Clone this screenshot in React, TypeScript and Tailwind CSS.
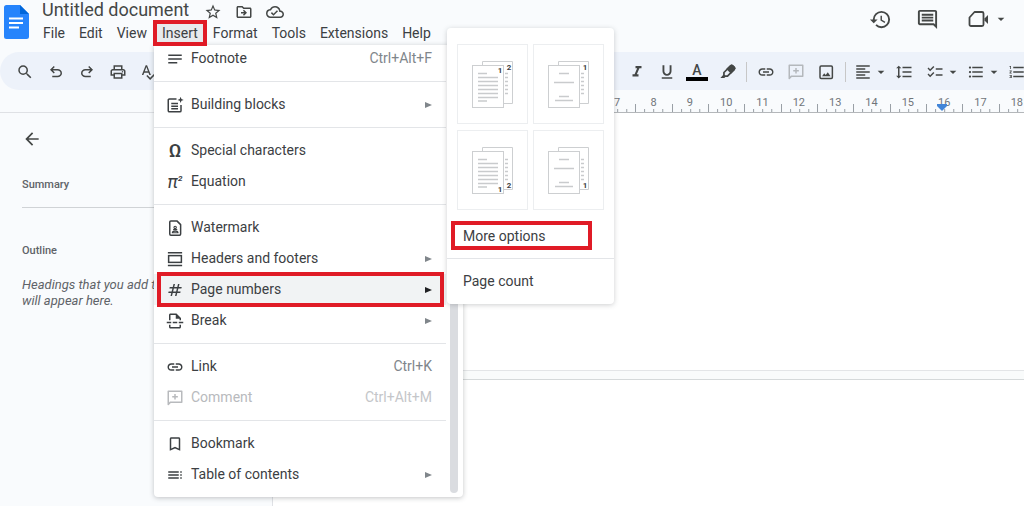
import type { ReactNode } from "react";
import {
  MdArrowBack,
  MdArrowDropDown,
  MdBookmarkBorder,
  MdChecklist,
  MdFormatAlignLeft,
  MdFormatItalic,
  MdFormatLineSpacing,
  MdFormatListBulleted,
  MdFormatListNumbered,
  MdFormatUnderlined,
  MdHistory,
  MdLink,
  MdNotes,
  MdNumbers,
  MdOutlineCloudDone,
  MdOutlineComment,
  MdOutlineDriveFileMove,
  MdOutlineInsertPageBreak,
  MdOutlinePrint,
  MdSearch,
  MdSpellcheck,
  MdStarBorder,
  MdToc,
} from "react-icons/md";

/* ---------- icons the package lacks ---------- */

function DocsLogo() {
  return (
    <svg viewBox="0 0 25 34" className="h-[34px] w-[25px] shrink-0" aria-hidden="true">
      <path d="M2.5 0H16l9 9v22.500a2.500 2.500 0 0 1-2.500 2.500h-20A2.500 2.500 0 0 1 0 31.500v-29A2.500 2.500 0 0 1 2.500 0z" fill="#2684fc" />
      <path d="M16 0l9 9h-9z" fill="#0066da" />
      <path d="M5 13.500h14M5 18h14M5 22.500h10" stroke="#fff" strokeWidth="1.900" />
    </svg>
  );
}

function UndoIcon({ flip = false }: { flip?: boolean }) {
  return (
    <svg viewBox="0 0 24 24" className={flip ? "size-[18px] -scale-x-100" : "size-[18px]"} fill="currentColor" aria-hidden="true">
      <path d="M7 19v-2h7.100q1.575 0 2.738-1T18 13.500 16.838 11 14.100 10H7.800l2.600 2.600L9 14 4 9l5-5 1.400 1.400L7.800 8h6.300q2.425 0 4.163 1.575T20 13.500t-1.737 3.925T14.100 19z" />
    </svg>
  );
}

function AddCommentIcon({ className = "size-[18px]" }: { className?: string }) {
  return (
    <svg viewBox="0 0 24 24" className={className} fill="none" stroke="currentColor" strokeWidth="2" aria-hidden="true">
      <path d="M3 20.500V3h18v14.500H6z" strokeLinejoin="round" />
      <path d="M12 6.500v7.500M8.300 10.200h7.500" />
    </svg>
  );
}

function HighlightIcon() {
  return (
    <svg viewBox="0 0 24 24" className="size-[19px]" fill="none" stroke="currentColor" strokeWidth="2.200" aria-hidden="true">
      <path d="M7.500 12L16 3.500a1.800 1.800 0 0 1 2.500 0l2 2a1.800 1.800 0 0 1 0 2.500L12 16.500H8.500L7.500 15.500z" strokeLinejoin="round" />
      <path d="M12 7.500L16 3.500a1.800 1.800 0 0 1 2.500 0l2 2a1.800 1.800 0 0 1 0 2.500l-4 4z" fill="currentColor" />
      <path d="M7 14.500L3 19h5l2-2z" fill="currentColor" stroke="none" />
    </svg>
  );
}

function ImageIcon() {
  return (
    <svg viewBox="0 0 24 24" className="size-[18px]" fill="none" stroke="currentColor" strokeWidth="2" aria-hidden="true">
      <rect x="4" y="4" width="16.500" height="16.500" rx="1.500" />
      <path d="M6.800 17.500l2.800-3.800 2 2.400 2.800-3.700 3.600 5.100z" fill="currentColor" stroke="none" />
    </svg>
  );
}

function CameraIcon() {
  return (
    <svg viewBox="0 0 24 24" className="size-6" fill="none" stroke="currentColor" strokeWidth="1.800" aria-hidden="true">
      <path d="M2.500 10.500l5-5.500H15a1.500 1.500 0 0 1 1.500 1.500v11a1.500 1.500 0 0 1-1.500 1.500H4a1.500 1.500 0 0 1-1.500-1.500z" strokeLinejoin="round" />
      <path d="M17.500 11.500l3.500-3.500v9l-3.500-3.500z" fill="currentColor" stroke="none" />
    </svg>
  );
}

function BlocksIcon() {
  return (
    <svg viewBox="0 0 24 24" className="size-[18px]" fill="none" stroke="currentColor" strokeWidth="2" aria-hidden="true">
      <path d="M14 4H4.500A1.500 1.500 0 0 0 3 5.500v14A1.500 1.500 0 0 0 4.500 21h14a1.500 1.500 0 0 0 1.500-1.500V12" />
      <path d="M7 10h9M7 13.500h9M7 17h9" />
      <path d="M19.500 1l1.100 3 3 1.200-3 1.100-1.100 3-1.200-3-3-1.100 3-1.200z" fill="currentColor" stroke="none" />
    </svg>
  );
}

function WatermarkIcon() {
  return (
    <svg viewBox="0 0 24 24" className="size-[18px]" fill="none" stroke="currentColor" strokeWidth="2" aria-hidden="true">
      <path d="M14.500 2.500H6.500A1.500 1.500 0 0 0 5 4v16a1.500 1.500 0 0 0 1.500 1.500h11.500a1.500 1.500 0 0 0 1.500-1.500V7.500z" strokeLinejoin="round" />
      <circle cx="12.200" cy="11.200" r="1.600" strokeWidth="1.500" />
      <path d="M8.500 18.300c0-2.800 7.500-2.800 7.500 0zM9.500 14.200h5.500" strokeWidth="1.500" />
    </svg>
  );
}

function HeaderFooterIcon() {
  return (
    <svg viewBox="0 0 24 24" className="size-[18px]" fill="none" stroke="currentColor" strokeWidth="2" aria-hidden="true">
      <path d="M2.500 3.500h19M2.500 20.500h19" />
      <rect x="3.500" y="7.500" width="17" height="9" />
    </svg>
  );
}

/* ---------- top bar ---------- */

const MENUS = ["File", "Edit", "View", "Insert", "Format", "Tools", "Extensions", "Help"];

function Header() {
  return (
    <header className="flex h-[52px] items-start justify-between pl-1">
      <div className="flex">
        <div className="pt-[5px]">
          <DocsLogo />
        </div>
        <div className="pl-[7px]">
          <div className="flex h-5 items-center gap-3 pl-[6px] text-[#444746]">
            <h1 className="text-[18px] leading-5">Untitled document</h1>
            <div className="flex gap-[13px] pt-[3px] pl-[3px]">
              <button aria-label="Star"><MdStarBorder className="size-[18px]" /></button>
              <button aria-label="Move"><MdOutlineDriveFileMove className="size-[18px]" /></button>
              <button aria-label="Saved"><MdOutlineCloudDone className="size-[18px]" /></button>
            </div>
          </div>
          <nav className="flex pt-1 text-[14px] leading-[18px] text-[#3c4043]">
            {MENUS.map((name) =>
              name === "Insert" ? (
                <button key={name} className="relative mx-px px-[7px]">
                  <span className="absolute -inset-x-[2px] -top-1 -bottom-1 z-20 border-4 border-[#e01b26]" />
                  <span className="absolute inset-x-0 inset-y-0 bg-[#e8eaed]" />
                  <span className="relative">{name}</span>
                </button>
              ) : (
                <button key={name} className="px-[7px]">{name}</button>
              ),
            )}
          </nav>
        </div>
      </div>
      <div className="flex items-center gap-6 pt-[7px] pr-[15px] text-[#444746]">
        <button aria-label="Version history"><MdHistory className="size-[23px]" /></button>
        <button aria-label="Comments"><MdOutlineComment className="size-[23px]" /></button>
        <button aria-label="Join a call" className="ml-1 flex items-center gap-[2px]">
          <CameraIcon />
          <MdArrowDropDown className="size-4" />
        </button>
      </div>
    </header>
  );
}

function Tool({ label, wide = true, children }: { label: string; wide?: boolean; children: ReactNode }) {
  return (
    <button
      aria-label={label}
      className={wide ? "flex w-[30px] shrink-0 items-center justify-center" : "flex shrink-0 items-center gap-px"}
    >
      {children}
    </button>
  );
}

function Toolbar() {
  const icon = "size-[18px]";
  return (
    <div className="flex h-[38px] items-center justify-between overflow-hidden rounded-l-full bg-[#edf2fa] pt-[2px] text-[#444746]">
      <div className="flex items-center gap-px pl-[10px]">
        <Tool label="Search"><MdSearch className={icon} /></Tool>
        <Tool label="Undo"><UndoIcon /></Tool>
        <Tool label="Redo"><UndoIcon flip /></Tool>
        <Tool label="Print"><MdOutlinePrint className={icon} /></Tool>
        <Tool label="Spelling"><MdSpellcheck className={icon} /></Tool>
      </div>
      <div className="-mr-[2px] flex items-center">
        <Tool label="Italic"><MdFormatItalic className={icon} /></Tool>
        <Tool label="Underline"><MdFormatUnderlined className={icon} /></Tool>
        <Tool label="Text color">
          <span className="flex w-[22px] flex-col items-center">
            <span className="text-[14px] leading-[14px] font-medium">A</span>
            <span className="h-1 w-full bg-black" />
          </span>
        </Tool>
        <Tool label="Highlight color"><HighlightIcon /></Tool>
        <span className="mx-1 h-5 w-px bg-[#c7c7c7]" />
        <Tool label="Insert link"><MdLink className={icon} /></Tool>
        <Tool label="Add comment"><AddCommentIcon className="size-[18px] text-[#b4b8bc]" /></Tool>
        <Tool label="Insert image"><ImageIcon /></Tool>
        <span className="mx-1 h-5 w-px bg-[#c7c7c7]" />
        <div className="flex items-center gap-[6px] pl-1">
          <Tool label="Align" wide={false}>
            <MdFormatAlignLeft className={icon} />
            <MdArrowDropDown className="size-4" />
          </Tool>
          <Tool label="Line spacing" wide={false}><MdFormatLineSpacing className={icon} /></Tool>
          <span className="w-px" />
          <Tool label="Checklist" wide={false}>
            <MdChecklist className={icon} />
            <MdArrowDropDown className="size-4" />
          </Tool>
          <Tool label="Bulleted list" wide={false}>
            <MdFormatListBulleted className={icon} />
            <MdArrowDropDown className="size-4" />
          </Tool>
          <Tool label="Numbered list" wide={false}><MdFormatListNumbered className={icon} /></Tool>
        </div>
      </div>
    </div>
  );
}

/* ---------- ruler ---------- */

const RULER = Array.from({ length: 12 }, (_, i) => i + 7);

function Ruler() {
  return (
    <div className="flex h-[23px] overflow-hidden">
      <div className="w-[599px] shrink-0 border-b border-[#dfe1e5]" />
      <ol className="relative grid w-[436px] shrink-0 grid-cols-12 border-b border-[#b4b7ba] text-[11px] text-[#70757a]">
        {RULER.map((n) => (
          <li key={n} className="relative flex h-[22px] items-start justify-center">
            <span className="leading-[26px]">{n}</span>
            <svg viewBox="0 0 36 8" preserveAspectRatio="none" className="absolute bottom-0 left-0 h-2 w-full" aria-hidden="true">
              <path d="M.5 0v8M9.500 5v3M18.500 5v3M27.500 5v3" stroke="#9aa0a6" />
            </svg>
          </li>
        ))}
        <svg viewBox="0 0 10 7" className="absolute top-[14px] right-[88px] h-[7px] w-[10px]" aria-hidden="true">
          <path d="M0 0h10v2L5 7 0 2z" fill="#4285d8" />
        </svg>
      </ol>
    </div>
  );
}

/* ---------- document body ---------- */

function Sidebar() {
  return (
    <aside className="w-[273px] shrink-0 border-r border-[#dfe1e5] pt-4 pl-[22px] text-[#5f6368]">
      <button aria-label="Close outline" className="block text-[#444746]">
        <MdArrowBack className="size-5" />
      </button>
      <h2 className="mt-7 text-[11px] leading-4 font-medium">Summary</h2>
      <div className="mt-[14px] h-px bg-[#d0d3d6]" />
      <h2 className="mt-[35px] text-[11px] leading-4 font-medium">Outline</h2>
      <p className="mt-[18px] text-[13px] leading-4 italic">
        Headings that you add to
        <br />
        will appear here.
      </p>
    </aside>
  );
}

function Pages() {
  return (
    <main className="flex grow flex-col">
      <div className="h-[258px] border-b border-[#e3e5e7] bg-white" />
      <div className="h-2 bg-[#f9fbfb]" />
      <div className="grow border-t border-[#d5d9da] bg-white" />
    </main>
  );
}

/* ---------- insert menu ---------- */

interface Entry {
  label: string;
  icon: ReactNode;
  shortcut?: string;
  submenu?: boolean;
  active?: boolean;
  disabled?: boolean;
}

const GROUPS: Entry[][] = [
  [{ label: "Footnote", icon: <MdNotes className="size-[18px]" />, shortcut: "Ctrl+Alt+F" }],
  [{ label: "Building blocks", icon: <BlocksIcon />, submenu: true }],
  [
    { label: "Special characters", icon: <span className="text-[19px] font-medium">Ω</span> },
    {
      label: "Equation",
      icon: (
        <span className="flex text-[18px] italic">
          π<sup className="top-0 text-[8px] leading-[12px] font-bold">2</sup>
        </span>
      ),
    },
  ],
  [
    { label: "Watermark", icon: <WatermarkIcon /> },
    { label: "Headers and footers", icon: <HeaderFooterIcon />, submenu: true },
    { label: "Page numbers", icon: <MdNumbers className="size-[18px]" />, submenu: true, active: true },
    { label: "Break", icon: <MdOutlineInsertPageBreak className="size-[18px]" />, submenu: true },
  ],
  [
    { label: "Link", icon: <MdLink className="size-[18px]" />, shortcut: "Ctrl+K" },
    { label: "Comment", icon: <AddCommentIcon />, shortcut: "Ctrl+Alt+M", disabled: true },
  ],
  [
    { label: "Bookmark", icon: <MdBookmarkBorder className="size-[18px]" /> },
    { label: "Table of contents", icon: <MdToc className="size-[18px]" />, submenu: true },
  ],
];

function MenuRow({ entry }: { entry: Entry }) {
  return (
    <button
      disabled={entry.disabled}
      className={`relative flex h-[31px] w-full items-center pr-[14px] pl-3 text-left ${
        entry.disabled ? "text-[#b8babd]" : "text-[#3c4043]"
      } ${entry.active ? "bg-[#f1f3f4]" : ""}`}
    >
      <span className="flex w-[18px] justify-center leading-[18px]">{entry.icon}</span>
      <span className="pl-[7px]">{entry.label}</span>
      {entry.shortcut && (
        <span className={entry.disabled ? "ml-auto text-[#c4c6c9]" : "ml-auto text-[#80868b]"}>{entry.shortcut}</span>
      )}
      {entry.submenu && (
        <svg
          viewBox="0 0 7 6"
          className={`ml-auto h-[6px] w-[7px] ${entry.active ? "text-[#202124]" : "text-[#80868b]"}`}
          aria-hidden="true"
        >
          <path d="M0 0l7 3-7 3z" fill="currentColor" />
        </svg>
      )}
      {entry.active && <span className="absolute -inset-y-[2px] right-[2px] left-[3px] border-4 border-[#e01b26]" />}
    </button>
  );
}

function InsertMenu() {
  return (
    <div className="absolute top-[45px] left-[154px] z-10 flex w-[309px] justify-between overflow-hidden rounded-b bg-white pb-[7px] text-[14px] shadow-[0_1px_5px_rgba(60,64,67,0.3)]">
      <div className="-mt-[2px] w-[292px]">
        {GROUPS.map((group, i) => (
          <div key={group[0].label}>
            {i > 0 && <div className="my-[7px] h-px bg-[#e3e5e8]" />}
            {group.map((entry) => (
              <MenuRow key={entry.label} entry={entry} />
            ))}
          </div>
        ))}
      </div>
      <div className="mr-[5px] -mb-[3px] w-2 rounded-full bg-[#dadce0]" />
    </div>
  );
}

/* ---------- page numbers submenu ---------- */

interface Layout {
  label: string;
  both: boolean;
  bottom: boolean;
}

const LAYOUTS: Layout[] = [
  { label: "Header on every page", both: true, bottom: false },
  { label: "Header, skip first page", both: false, bottom: false },
  { label: "Footer on every page", both: true, bottom: true },
  { label: "Footer, skip first page", both: false, bottom: true },
];

function LayoutThumb({ both, bottom }: Layout) {
  return (
    <svg viewBox="0 0 42 48" className="h-12 w-[42px]" fill="none" aria-hidden="true">
      <path d="M10.500 4.500V.5h30v42h-9" stroke="#cdcfd1" />
      <rect x=".5" y="4.500" width="31" height="42" stroke="#cdcfd1" fill="#fff" />
      <path d="M33 12.500h3M33 16.500h3M33 20.500h3M33 24.500h3M33 28.500h3M33 32.500h3" stroke="#c9cbcd" strokeWidth="1.500" />
      {both ? (
        <path
          d="M6 12.500h9M6 16.500h20M6 20.500h20M6 24.500h20M6 28.500h20M6 32.500h20M6 36.500h20M6 40h9"
          stroke="#c9cbcd"
          strokeWidth="1.600"
        />
      ) : (
        <path d="M11 12.500h10M6 21.500h20M11 35.500h10M7 39.500h18" stroke="#c9cbcd" strokeWidth="1.600" />
      )}
      <g fill="#3c4043" fontSize="8" fontWeight="700" textAnchor="middle">
        {both && <text x="28" y={bottom ? 44.5 : 12}>1</text>}
        <text x="37" y={bottom ? 41 : 8.5}>{both ? 2 : 1}</text>
      </g>
    </svg>
  );
}

function PageNumbersMenu() {
  return (
    <div className="absolute top-7 left-[447px] z-20 w-[167px] rounded bg-white pt-4 text-[14px] text-[#3c4043] shadow-[0_1px_5px_rgba(60,64,67,0.25)]">
      <div className="grid grid-cols-2 gap-x-[5px] gap-y-[6px] px-[10px]">
        {LAYOUTS.map((layout) => (
          <button
            key={layout.label}
            aria-label={layout.label}
            className="flex h-20 items-center justify-center border border-[#eceef0] pt-[2px]"
          >
            <LayoutThumb {...layout} />
          </button>
        ))}
      </div>
      <button className="mt-[11px] ml-1 block h-[29px] w-[141px] border-4 border-[#e01b26] pl-2 text-left leading-5">
        More options
      </button>
      <div className="mt-2 h-px bg-[#e3e5e8]" />
      <button className="block h-[45px] w-full pl-4 text-left">Page count</button>
    </div>
  );
}

export default function App() {
  return (
    <div className="relative flex min-h-screen flex-col overflow-hidden bg-[#f9fbfd] font-[Roboto,sans-serif]">
      <Header />
      <Toolbar />
      <Ruler />
      <div className="flex grow">
        <Sidebar />
        <Pages />
      </div>
      <InsertMenu />
      <PageNumbersMenu />
    </div>
  );
}
